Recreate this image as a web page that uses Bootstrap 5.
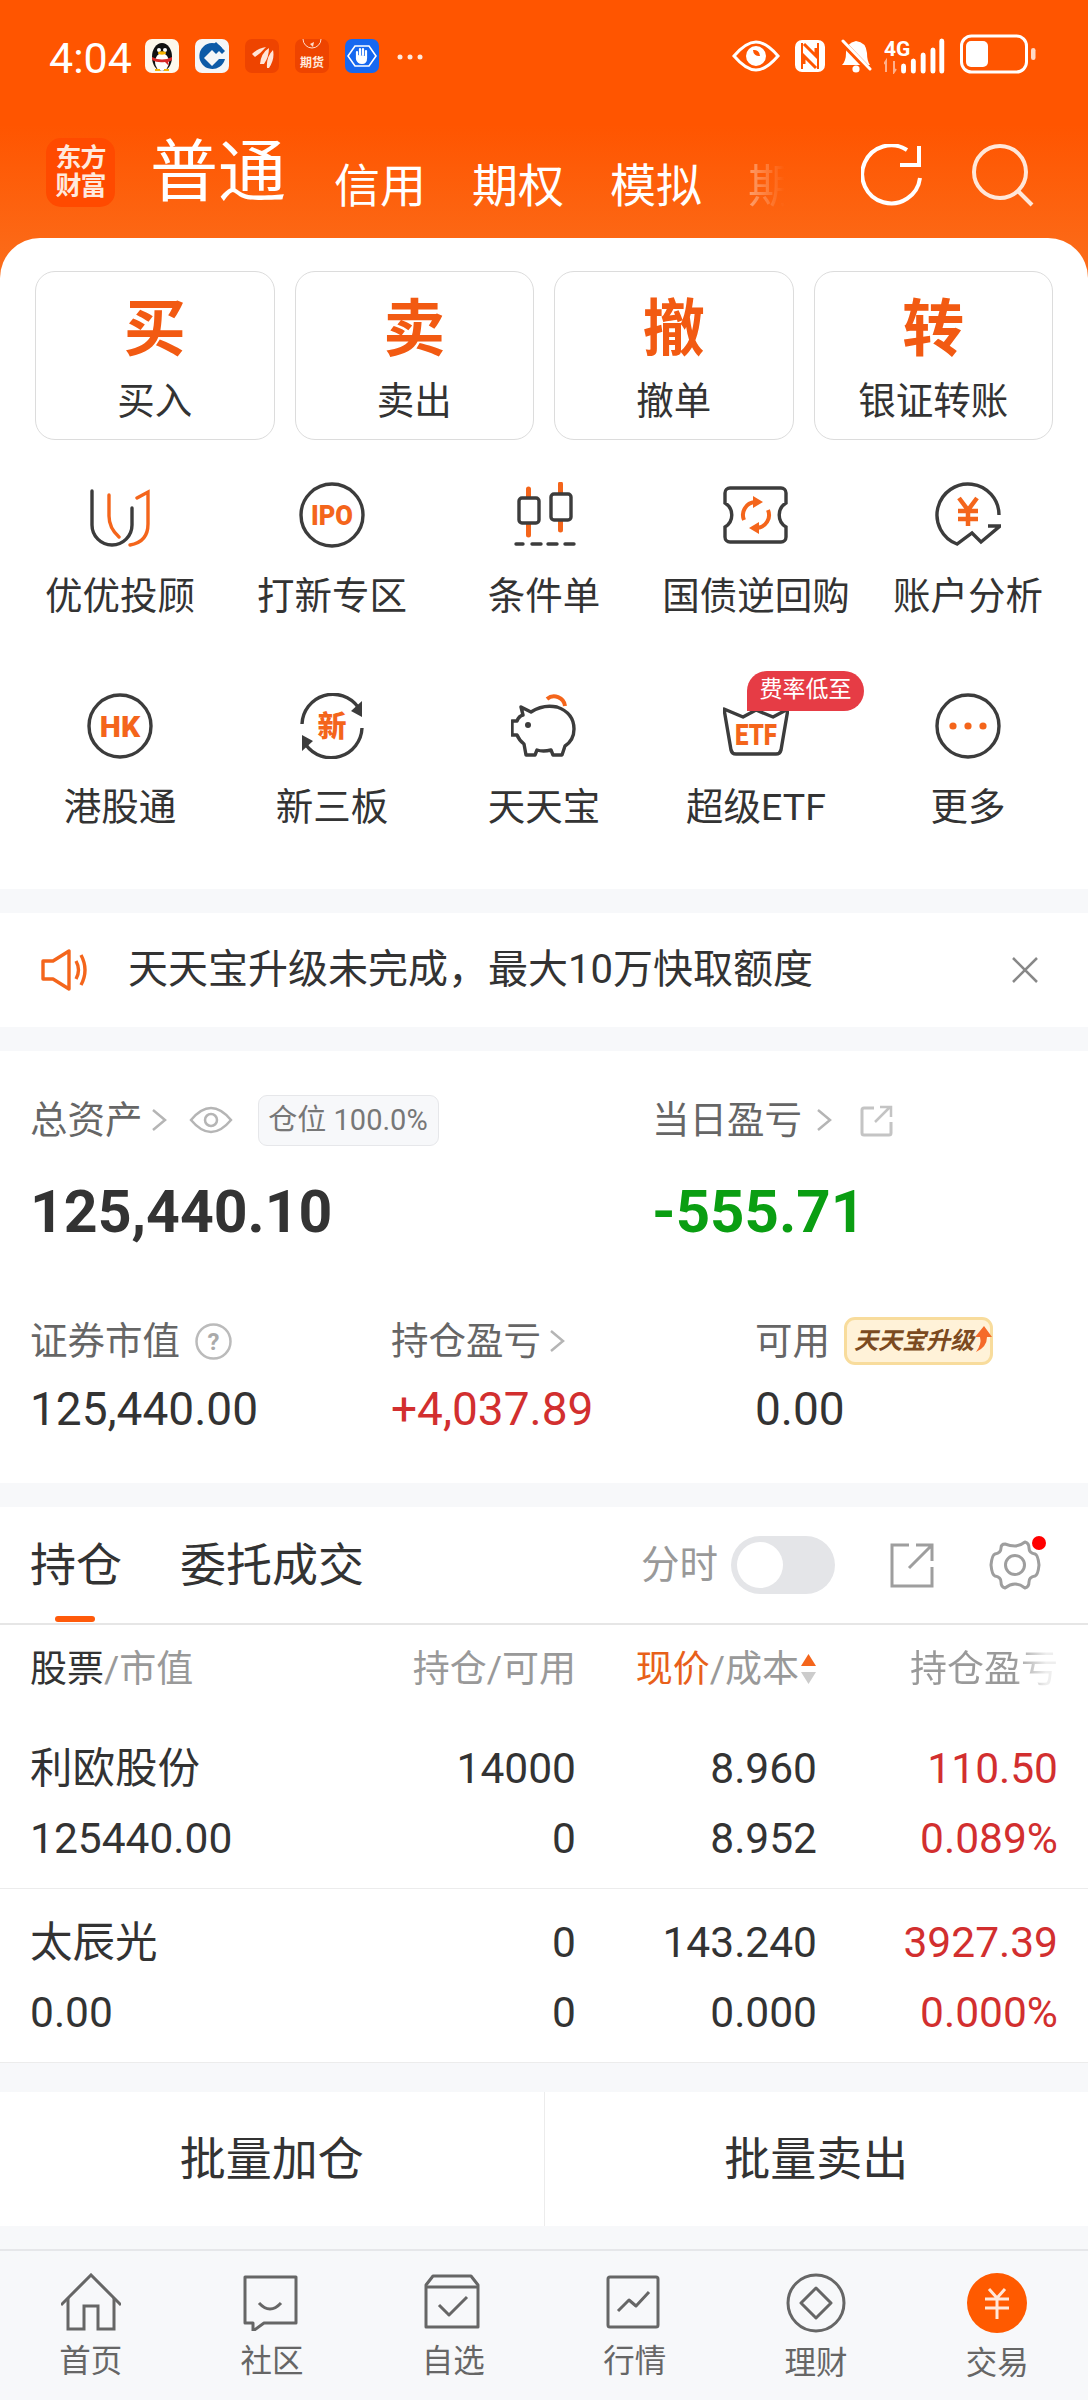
<!DOCTYPE html>
<html lang="zh-CN">
<head>
<meta charset="UTF-8">
<meta name="viewport" content="width=device-width, initial-scale=1.0">
<title>交易</title>
<link href="https://cdn.jsdelivr.net/npm/bootstrap@5.3.2/dist/css/bootstrap.min.css" rel="stylesheet">
<style>
  body { width: 1088px; height: 2400px; overflow: hidden; background: #f7f8fa; color: #333; font-family: Roboto, "Noto Sans CJK SC", sans-serif; }
  svg { display: block; flex: none; }
  .top-wrap { background: linear-gradient(#ff5500 0, #ff5500 125px, #fb6e1c 280px) no-repeat; background-size: 100% 280px; }
  .status-row { height: 112px; padding: 34px 50px 0 49px; color: #fff; }
  .status-time { font-size: 43px; line-height: 48px; width: 96px; }
  .app-ico { width: 34px; height: 34px; border-radius: 7px; margin-right: 16px; margin-top: 5px; overflow: hidden; }
  .app-more { margin-top: 14px; margin-left: 2px; }
  .stat-eye { margin-top: 5px; }
  .stat-nfc, .stat-bell { margin-top: 5px; margin-left: 14px; }
  .stat-net { margin-top: 4px; margin-left: 12px; }
  .stat-batt { margin-left: 12px; }
  .head-row { height: 126px; padding: 26px 53px 0 46px; color: #fff; }
  .brand-logo { width: 69px; height: 69px; border-radius: 15px; background: #ff4a00; font-size: 26px; line-height: 28px; font-weight: 700; text-align: center; padding-top: 6px; letter-spacing: -1px; color: #ffe9dd; margin-right: 35px; }
  .head-main { font-size: 68px; line-height: 70px; margin-right: 48px; }
  .head-tab { font-size: 46px; line-height: 50px; margin-right: 46px; margin-top: 23px; white-space: nowrap; }
  .head-fade { width: 46px; margin-right: 0; background: linear-gradient(90deg, rgba(255,255,255,.4), rgba(255,255,255,0) 80%); -webkit-background-clip: text; background-clip: text; color: transparent; }
  .head-reload { margin-left: auto; margin-top: 6px; margin-right: 48px; }
  .head-search { margin-top: 5px; }
  .sheet { background: #fff; border-radius: 40px 40px 0 0; padding: 33px 14px 58px; height: 651px; }
  .action-row { padding: 0 21px; gap: 20px; }
  .action-btn { width: 239.5px; height: 169px; border: 1px solid #dcdcdc; border-radius: 20px; padding: 0; background: #fff; color: #333; font-size: 37.5px; line-height: 50px; }
  .action-btn b { display: block; font-size: 62px; line-height: 72px; color: #f25a12; margin-top: 8px; margin-bottom: 10px; }
  .entry-grid { display: grid; grid-template-columns: repeat(5, 212px); row-gap: 72px; margin-top: 42px; }
  .entry-cell { text-align: center; font-size: 37.5px; line-height: 50px; white-space: nowrap; position: relative; }
  .entry-cell svg { margin: 0 auto 23px; }
  .fee-tag { position: absolute; left: 97px; top: -22px; width: 117px; height: 40px; background: #e63c45; color: #fff; font-size: 23px; line-height: 38px; border-radius: 20px 20px 20px 0; }
  .gap-band { height: 24px; background: #f7f8fa; }
  .notice-bar { height: 114px; background: #fff; padding: 0 48px 0 41px; font-size: 40px; }
  .notice-bar span { margin-left: 41px; }
  .asset-panel { background: #fff; height: 432px; padding: 44px 0 0 30px; }
  .asset-label { height: 50px; font-size: 37.5px; line-height: 50px; color: #666; white-space: nowrap; }
  .asset-big { height: 100px; margin-top: 17px; font-size: 59px; line-height: 100px; font-weight: 700; }
  .asset-big.text-down { font-size: 60px; }
  .asset-num { height: 70px; margin-top: 8px; font-size: 46px; line-height: 70px; }
  .col-first { width: 622px; }
  .col-b1 { width: 361px; }
  .col-b2 { width: 364px; }
  .second-row { margin-top: 54px; }
  .chevron-a { margin-left: 8px; }
  .chevron-b { margin-left: 14px; }
  .eye-ico { margin-left: 22px; }
  .out-ico { margin-left: 28px; }
  .help-ico { margin-left: 15px; }
  .pos-chip { width: 181px; height: 51px; margin-left: 25px; border: 1px solid #e6e7ea; border-radius: 9px; background: #f7f8fa; color: #777; font-size: 29px; line-height: 49px; text-align: center; }
  .upgrade-tag { width: 149px; height: 48px; margin-left: 14px; border: 3px solid #f8dc9c; border-radius: 11px; background: #fff2d8; color: #7b4a20; font-size: 24px; font-weight: 700; font-style: italic; line-height: 42px; padding-left: 7px; white-space: nowrap; }
  .text-down { color: #0a9e12; }
  .text-up { color: #d22f2f; }
  .text-accent { color: #e8601a; }
  .hold-tabs { height: 118px; background: #fff; border-bottom: 2px solid #e6e6e6; padding: 0 46px 0 30px; position: relative; }
  .hold-tab { font-size: 46px; line-height: 60px; margin-right: 58px; color: #333; }
  .hold-mark { position: absolute; left: 55px; bottom: 1px; width: 40px; height: 6px; border-radius: 3px; background: #ff5a0a; }
  .time-label { font-size: 38.5px; color: #999; margin-right: 13px; margin-left: auto; }
  .time-switch { width: 104px; height: 58px; border-radius: 29px; background: #e4e5e8; padding: 6px; margin-right: 55px; }
  .time-switch i { display: block; width: 46px; height: 46px; border-radius: 50%; background: #fff; }
  .gear-wrap { position: relative; margin-left: 54px; }
  .gear-dot { position: absolute; right: -4px; top: -3px; width: 14px; height: 14px; border-radius: 50%; background: #f00; }
  .grid-line { display: grid; grid-template-columns: 1fr 241px 241px 241px; padding: 0 30px; text-align: right; background: #fff; }
  .grid-line > :first-child { text-align: left; }
  .hold-head { height: 90px; font-size: 37px; line-height: 90px; color: #999; }
  .hold-head b { font-weight: 400; color: #333; }
  .sort-ico { display: inline-block; vertical-align: -4px; margin-left: 1px; }
  .fade-end { background: linear-gradient(90deg, #999 70%, #eee 92%); -webkit-background-clip: text; background-clip: text; color: transparent; }
  .hold-row { height: 174px; padding-top: 19px; border-bottom: 1px solid #ececec; font-size: 42.5px; line-height: 70px; }
  .bulk-row { margin-top: 29px; height: 134px; background: #fff; font-size: 46px; }
  .bulk-btn { flex: 1; height: 134px; border: 0; border-radius: 0; background: #fff; color: #333; font-size: 46px; padding: 0; }
  .bulk-btn + .bulk-btn { border-left: 1px solid #ececec; }
  .bottom-bar { margin-top: 23px; border-top: 2px solid #e6e7ea; height: 151px; display: grid; grid-template-columns: repeat(6, 1fr); }
  .bar-item { text-align: center; font-size: 31.5px; line-height: 40px; color: #666; padding-top: 22px; }
  .bar-item svg { margin: 0 auto 11px; }
</style>
</head>
<body>

<div class="top-wrap">
  <div class="status-row d-flex align-items-start">
    <div class="status-time">4:04</div>
    <div class="app-ico">
      <svg width="34" height="34" viewBox="0 0 34 34"><rect width="34" height="34" fill="#fdf8ec"/><ellipse cx="17" cy="18" rx="10" ry="14" fill="#111"/><ellipse cx="17" cy="23" rx="7" ry="9" fill="#fff"/><circle cx="14" cy="11" r="2" fill="#fff"/><circle cx="20" cy="11" r="2" fill="#fff"/><ellipse cx="17" cy="14" rx="4" ry="1.7" fill="#f5b400"/><path d="M7 18Q17 23 27 18V21Q24 23 23 23L24 27L20 23Q12 24 7 21Z" fill="#d82a2a"/><path d="M10 31H15M19 31H24" stroke="#f5b400" stroke-width="2"/></svg>
    </div>
    <div class="app-ico">
      <svg width="34" height="34" viewBox="0 0 34 34"><rect width="34" height="34" fill="#f5f6f7"/><path d="M17 4A13 13 0 1 0 30 20H24L17 27L9 19L17 11L21 15L27 9Q23 4 17 4Z" fill="#0d5aa7"/><path d="M21 3L30 12L27 15L18 6Z" fill="#0d5aa7"/></svg>
    </div>
    <div class="app-ico">
      <svg width="34" height="34" viewBox="0 0 34 34"><rect width="34" height="34" fill="#ee4400"/><path d="M7 15Q13 9 21 8Q16 14 10 18ZM15 25Q16 14 24 9Q24 18 19 25ZM22 29Q21 18 28 11Q30 20 24 29Z" fill="#ffe5d8"/></svg>
    </div>
    <div class="app-ico">
      <svg width="34" height="34" viewBox="0 0 34 34"><rect width="34" height="34" fill="#ee4400"/><path d="M8 0A9 9 0 0 0 26 0" fill="none" stroke="#ffdccb" stroke-width="1"/><path d="M15 5L19 3L18 8Z" fill="#ffdccb"/><text x="17" y="28" text-anchor="middle" font-size="12" font-weight="700" fill="#ffe9dd">期货</text></svg>
    </div>
    <div class="app-ico">
      <svg width="34" height="34" viewBox="0 0 34 34"><rect width="34" height="34" fill="#1668f0"/><path d="M10 7H24L31 17L24 27H10L3 17Z" fill="none" stroke="#fff" stroke-width="1.6"/><path d="M12 16V13M15 16V10M18 16V10M21 17V12M12 16V20Q13 24 17 24Q21 24 21 19V17" fill="#fff" stroke="#fff" stroke-width="2.2" stroke-linecap="round"/></svg>
    </div>
    <svg class="app-more" width="26" height="14" viewBox="0 0 26 14"><circle cx="3" cy="9" r="2.5" fill="#ffe9dd"/><circle cx="13" cy="9" r="2.5" fill="#ffe9dd"/><circle cx="23" cy="9" r="2.5" fill="#ffe9dd"/></svg>

    <div class="ms-auto d-flex align-items-start">
      <svg class="stat-eye" width="48" height="34" viewBox="0 0 48 34"><path d="M2 17Q14 3 24 3Q34 3 46 17Q34 31 24 31Q14 31 2 17Z" fill="none" stroke="#fff" stroke-width="3"/><path d="M24 7A10 10 0 1 0 34 17A10 10 0 0 0 24 7ZM21 11A6 6 0 0 1 28 17A6 6 0 0 1 21 11Z" fill="#fff" fill-rule="evenodd"/></svg>
      <svg class="stat-nfc" width="32" height="34" viewBox="0 0 32 34"><rect x="1" y="1" width="30" height="32" rx="7" fill="#fff"/><path d="M8 4V30M24 4V30" stroke="#ff5500" stroke-width="2"/><path d="M10 5L22 17V9M10 25V17L22 29" fill="none" stroke="#ff5500" stroke-width="3"/></svg>
      <svg class="stat-bell" width="32" height="34" viewBox="0 0 32 34"><path d="M2 26Q6 22 6 14Q6 4 16 2Q26 3 27 14Q27 22 30 26Z" fill="#fff"/><circle cx="16" cy="30" r="3.6" fill="#fff"/><path d="M3 4L30 32" stroke="#ff5500" stroke-width="6"/><path d="M3 2L30 30" stroke="#fff" stroke-width="3" stroke-linecap="round"/></svg>
      <svg class="stat-net" width="64" height="36" viewBox="0 0 64 36"><text x="0" y="18" font-size="21" font-weight="700" fill="#fff">4G</text><path d="M2 34V23L0 26M10 23V34L12 31" fill="none" stroke="#ffb08a" stroke-width="2"/><g stroke="#fff" stroke-width="5" stroke-linecap="round"><path d="M22 28V33M32 23V33M42 17V33M52 12V33M61 3V33" transform="translate(-2,0) scale(.98,1)"/></g></svg>
      <svg class="stat-batt" width="78" height="40" viewBox="0 0 78 40"><rect x="1.500" y="2" width="65" height="36" rx="10" fill="none" stroke="#fff" stroke-width="3"/><rect x="6" y="7" width="22" height="26" rx="5" fill="#fff"/><rect x="71" y="14" width="4.5" height="12" rx="2.2" fill="#ffd9c5"/></svg>
    </div>
  </div>

  <div class="head-row d-flex align-items-start">
    <div class="brand-logo">东方<br>财富</div>
    <div class="head-main">普通</div>
    <div class="head-tab">信用</div>
    <div class="head-tab">期权</div>
    <div class="head-tab">模拟</div>
    <div class="head-tab head-fade">期</div>
    <svg class="head-reload" width="62" height="62" viewBox="0 0 62 62"><path d="M59 34A29 29 0 1 1 46 6" fill="none" stroke="#fff" stroke-width="4"/><path d="M58 2V21H39" fill="none" stroke="#fff" stroke-width="4"/></svg>
    <svg class="head-search" width="64" height="64" viewBox="0 0 64 64"><circle cx="29" cy="29" r="26" fill="none" stroke="#ffe7d9" stroke-width="4"/><path d="M47 48L61 62" stroke="#ffe7d9" stroke-width="4"/></svg>
  </div>

  <div class="sheet">
    <div class="action-row d-flex">
      <button class="btn action-btn"><b>买</b>买入</button>
      <button class="btn action-btn"><b>卖</b>卖出</button>
      <button class="btn action-btn"><b>撤</b>撤单</button>
      <button class="btn action-btn"><b>转</b>银证转账</button>
    </div>

    <div class="entry-grid">
      <div class="entry-cell">
        <svg width="66" height="66" viewBox="0 0 66 66" fill="none" stroke-width="3.4" stroke-linecap="round"><path d="M5 9V43A20 20 0 0 0 45 43V26" stroke="#3c3c3c"/><path d="M22 13V34Q22 46 32 55M50 16L61 10V42Q61 60 43 63" stroke="#f4651b"/></svg>
        优优投顾
      </div>
      <div class="entry-cell">
        <svg width="66" height="66" viewBox="0 0 66 66"><circle cx="33" cy="33" r="31" fill="none" stroke="#3c3c3c" stroke-width="3.4"/><text x="33" y="43" text-anchor="middle" font-size="28" font-weight="900" textLength="42" lengthAdjust="spacingAndGlyphs" fill="#f4651b">IPO</text></svg>
        打新专区
      </div>
      <div class="entry-cell">
        <svg width="66" height="66" viewBox="0 0 66 66" fill="none" stroke-width="3.4" stroke-linecap="round"><path d="M17.500 7V53M49.500 2V48" stroke="#f4651b" stroke-width="5"/><rect x="8" y="16" width="20" height="25" rx="3" fill="#fff" stroke="#3c3c3c"/><rect x="40" y="12" width="20" height="26" rx="3" fill="#fff" stroke="#3c3c3c"/><path d="M5 62H12M21 62H30M37 62H46M54 62H63" stroke="#3c3c3c"/></svg>
        条件单
      </div>
      <div class="entry-cell">
        <svg width="66" height="66" viewBox="0 0 66 66" fill="none" stroke-width="3.4"><path d="M7 6H58A5 5 0 0 1 63 11V21A14 14 0 0 0 63 45V55A5 5 0 0 1 58 60H7A5 5 0 0 1 2 55V45A14 14 0 0 0 2 21V11A5 5 0 0 1 7 6Z" stroke="#3c3c3c"/><path d="M21 38A13 13 0 0 1 32 20M45 28A13 13 0 0 1 34 46" stroke="#f4651b" stroke-width="4"/><path d="M30 14L40 20L30 26ZM36 40L26 46L36 52Z" fill="#f4651b"/></svg>
        国债逆回购
      </div>
      <div class="entry-cell">
        <svg width="66" height="66" viewBox="0 0 66 66"><path d="M64 33A31 31 0 1 0 22 62L37 51L46 60L65 44H53" fill="none" stroke="#3c3c3c" stroke-width="3.4"/><path d="M24 16L33 28L42 16M33 28V44M23 29H43M23 37H43" fill="none" stroke="#f4651b" stroke-width="4.5"/></svg>
        账户分析
      </div>

      <div class="entry-cell">
        <svg width="66" height="66" viewBox="0 0 66 66"><circle cx="33" cy="33" r="31" fill="none" stroke="#3c3c3c" stroke-width="3.4"/><text x="33" y="44" text-anchor="middle" font-size="30" font-weight="900" fill="#f4651b">HK</text></svg>
        港股通
      </div>
      <div class="entry-cell">
        <svg width="66" height="66" viewBox="0 0 66 66"><path d="M3 31A31 31 0 0 1 59 14M63 35A31 31 0 0 1 7 52" fill="none" stroke="#3c3c3c" stroke-width="3.400"/><path d="M63 8V24L52 18ZM3 58V42L14 48Z" fill="#3c3c3c"/><text x="33" y="44" text-anchor="middle" font-size="29" font-weight="900" fill="#f4651b">新</text></svg>
        新三板
      </div>
      <div class="entry-cell">
        <svg width="66" height="66" viewBox="0 0 66 66"><path d="M10 14L20 19Q32 11 46 14Q63 20 63 36Q63 47 54 53L51 62H42L40 57Q32 59 26 57L24 62H15L13 51Q8 47 6 42H1V28H6Q8 23 12 22Z" fill="none" stroke="#3c3c3c" stroke-width="3.400" stroke-linejoin="round"/><circle cx="17" cy="32" r="3" fill="#3c3c3c"/><path d="M36 6A11 11 0 0 1 54 13" fill="none" stroke="#f4651b" stroke-width="4"/></svg>
        天天宝
      </div>
      <div class="entry-cell">
        <svg width="66" height="66" viewBox="0 0 66 66"><path d="M1 16L20 24L33 17L50 24L65 16L58 57Q57 61 53 61H13Q9 61 8 57Z" fill="none" stroke="#3c3c3c" stroke-width="3.400" stroke-linejoin="round"/><text x="33" y="52" text-anchor="middle" font-size="29" font-weight="900" textLength="42" lengthAdjust="spacingAndGlyphs" fill="#f4651b">ETF</text></svg>
        超级ETF
        <span class="fee-tag">费率低至</span>
      </div>
      <div class="entry-cell">
        <svg width="66" height="66" viewBox="0 0 66 66"><circle cx="33" cy="33" r="31" fill="none" stroke="#3c3c3c" stroke-width="3.4"/><circle cx="18" cy="33" r="3.600" fill="#f4651b"/><circle cx="33" cy="33" r="3.600" fill="#f4651b"/><circle cx="48" cy="33" r="3.600" fill="#f4651b"/></svg>
        更多
      </div>
    </div>
  </div>
</div>

<div class="gap-band"></div>

<div class="notice-bar d-flex align-items-center">
  <svg width="46" height="46" viewBox="0 0 46 46" fill="none" stroke="#f4651b" stroke-width="3.400" stroke-linejoin="round"><path d="M2 14H12L28 4V42L12 32H2Z"/><path d="M35 14Q40 23 35 32M40 8Q48 23 40 38"/></svg>
  <span>天天宝升级未完成，最大10万快取额度</span>
  <svg class="ms-auto" width="30" height="30" viewBox="0 0 30 30"><path d="M3 3L27 27M27 3L3 27" stroke="#888" stroke-width="2.500"/></svg>
</div>

<div class="gap-band"></div>

<div class="asset-panel">
  <div class="d-flex">
    <div class="col-first">
      <div class="asset-label d-flex align-items-center">总资产
        <svg class="chevron-a" width="16" height="26" viewBox="0 0 16 26"><path d="M2 3L14 13L2 23" fill="none" stroke="#b5b5b5" stroke-width="2.500"/></svg>
        <svg class="eye-ico" width="44" height="30" viewBox="0 0 44 30"><path d="M2 15Q12 3 22 3Q32 3 42 15Q32 27 22 27Q12 27 2 15Z" fill="none" stroke="#b5b5b5" stroke-width="2.500"/><circle cx="22" cy="15" r="6" fill="none" stroke="#b5b5b5" stroke-width="2.500"/></svg>
        <div class="pos-chip">仓位 100.0%</div>
      </div>
      <div class="asset-big">125,440.10</div>
    </div>
    <div>
      <div class="asset-label d-flex align-items-center">当日盈亏
        <svg class="chevron-b" width="16" height="26" viewBox="0 0 16 26"><path d="M2 3L14 13L2 23" fill="none" stroke="#b5b5b5" stroke-width="2.500"/></svg>
        <svg class="out-ico" width="33" height="33" viewBox="0 0 33 33" fill="none" stroke="#c4c4c4" stroke-width="3"><path d="M14 4H4Q2 4 2 6V29Q2 31 4 31H29Q31 31 31 29V18"/><path d="M15 18L30 3M20 3H31V13" stroke-width="2.500"/></svg>
      </div>
      <div class="asset-big text-down">-555.71</div>
    </div>
  </div>
  <div class="d-flex second-row">
    <div class="col-b1">
      <div class="asset-label d-flex align-items-center">证券市值
        <svg class="help-ico" width="37" height="37" viewBox="0 0 37 37"><circle cx="18.500" cy="18.500" r="17" fill="none" stroke="#bbb" stroke-width="2.500"/><text x="18.500" y="27" text-anchor="middle" font-size="24" font-weight="700" fill="#aaa">?</text></svg>
      </div>
      <div class="asset-num">125,440.00</div>
    </div>
    <div class="col-b2">
      <div class="asset-label d-flex align-items-center">持仓盈亏
        <svg class="chevron-a" width="16" height="26" viewBox="0 0 16 26"><path d="M2 3L14 13L2 23" fill="none" stroke="#b5b5b5" stroke-width="2.500"/></svg>
      </div>
      <div class="asset-num text-up">+4,037.89</div>
    </div>
    <div>
      <div class="asset-label d-flex align-items-center">可用
        <div class="upgrade-tag d-flex">天天宝升级<svg class="mt-1" width="18" height="30" viewBox="0 0 18 30"><path d="M10 2L18 13H13Q13 23 2 28Q8 20 6 13H1Z" fill="#f56a2a"/></svg></div>
      </div>
      <div class="asset-num">0.00</div>
    </div>
  </div>
</div>

<div class="gap-band"></div>

<div class="hold-tabs d-flex align-items-center">
  <div class="hold-tab text-accent">持仓</div>
  <div class="hold-tab">委托成交</div>
  <span class="hold-mark"></span>
  <div class="time-label">分时</div>
  <div class="time-switch"><i></i></div>
  <svg width="44" height="46" viewBox="0 0 44 46" fill="none" stroke="#9e9e9e" stroke-width="3"><path d="M19 3H2V44H42V25"/><path d="M19 26L41 4M26 3H42V19"/></svg>
  <div class="gear-wrap">
    <svg width="54" height="52" viewBox="0 0 54 52" fill="none" stroke="#9e9e9e" stroke-width="3" stroke-linejoin="round"><path d="M17 5Q22 7 27 7Q32 7 37 3Q41 4 41 9Q41 14 47 15Q50 16 51 26Q50 36 47 37Q41 38 41 43Q41 48 37 49Q32 45 27 45Q22 45 17 49Q13 48 13 43Q13 38 7 37Q4 36 3 26Q4 16 7 15Q13 14 13 9Q13 5 17 5Z"/><circle cx="27" cy="26" r="9.500"/></svg>
    <span class="gear-dot"></span>
  </div>
</div>

<div class="grid-line hold-head">
  <div><b>股票</b>/市值</div>
  <div>持仓/可用</div>
  <div><span class="text-accent">现价</span>/成本<svg class="sort-ico" width="17" height="34" viewBox="0 0 17 34"><path d="M8.500 2L16 14H1Z" fill="#f4651b"/><path d="M8.500 32L16 20H1Z" fill="#ccc"/></svg></div>
  <div><span class="fade-end">持仓盈亏</span></div>
</div>

<div class="grid-line hold-row">
  <div>利欧股份<br>125440.00</div>
  <div>14000<br>0</div>
  <div>8.960<br>8.952</div>
  <div class="text-up">110.50<br>0.089%</div>
</div>
<div class="grid-line hold-row">
  <div>太辰光<br>0.00</div>
  <div>0<br>0</div>
  <div>143.240<br>0.000</div>
  <div class="text-up">3927.39<br>0.000%</div>
</div>

<div class="bulk-row d-flex">
  <button class="btn bulk-btn">批量加仓</button>
  <button class="btn bulk-btn">批量卖出</button>
</div>

<nav class="bottom-bar">
  <div class="bar-item">
    <svg width="60" height="58" viewBox="0 0 60 58" fill="none" stroke="#666" stroke-width="3"><path d="M0 32L30 2L60 32"/><path d="M7 25V56H23V33H37V56H53V25"/></svg>
    首页
  </div>
  <div class="bar-item">
    <svg width="60" height="58" viewBox="0 0 60 58" fill="none" stroke="#666" stroke-width="3" stroke-linejoin="round"><path d="M3 4H54V50H22L11 58V50H3Z"/><path d="M17 30Q28 42 39 30"/></svg>
    社区
  </div>
  <div class="bar-item">
    <svg width="60" height="58" viewBox="0 0 60 58" fill="none" stroke="#666" stroke-width="3" stroke-linejoin="round"><path d="M3 12L10 3H48L55 12V54H3Z"/><path d="M3 14H55"/><path d="M16 32L26 42L44 24"/></svg>
    自选
  </div>
  <div class="bar-item">
    <svg width="60" height="58" viewBox="0 0 60 58" fill="none" stroke="#666" stroke-width="3" stroke-linejoin="round"><rect x="3" y="4" width="50" height="50" rx="2"/><path d="M13 38L24 27L31 33L44 19"/></svg>
    行情
  </div>
  <div class="bar-item">
    <svg width="60" height="60" viewBox="0 0 60 60" fill="none" stroke="#666" stroke-width="3" stroke-linejoin="round"><circle cx="30" cy="30" r="28"/><path d="M30 15L45 30L30 45L15 30Z"/></svg>
    理财
  </div>
  <div class="bar-item text-accent">
    <svg width="60" height="60" viewBox="0 0 60 60"><circle cx="30" cy="30" r="30" fill="#ff5a00"/><path d="M22 16L30 25L38 16M30 25V46M18 26H42M18 35H42" fill="none" stroke="#ffe7d9" stroke-width="3"/></svg>
    交易
  </div>
</nav>

</body>
</html>
